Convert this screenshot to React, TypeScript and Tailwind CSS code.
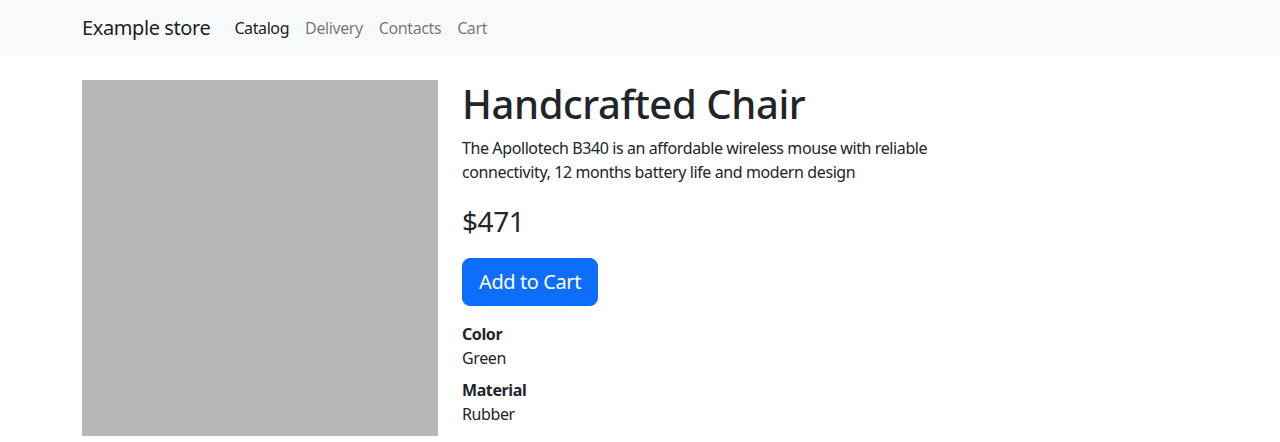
const navLinks = ["Catalog", "Delivery", "Contacts", "Cart"];

const specs = [
  { label: "Color", value: "Green" },
  { label: "Material", value: "Rubber" },
];

export default function App() {
  return (
    <div className="min-h-screen bg-white text-[#212529] font-['Noto_Sans',sans-serif] tracking-[-0.025em]">
      <nav className="h-14 bg-[#f8f9fa]">
        <div className="mx-auto flex h-full w-[1140px] items-center px-3">
          <span className="mr-4 text-xl text-black/90">Example store</span>
          <ul className="flex">
            {navLinks.map((link, i) => (
              <li key={link}>
                <a className={`block px-2 py-2 text-base ${i === 0 ? "text-black/90" : "text-black/55"}`}>{link}</a>
              </li>
            ))}
          </ul>
        </div>
      </nav>

      <main className="mx-auto mt-6 flex w-[1140px]">
        <div className="w-[380px] px-3">
          <div className="h-[356px] w-[356px] bg-[#b8b8b8]" />
        </div>
        <div className="w-[570px] px-3">
          <h1 className="mb-2 text-[40px] font-medium leading-[1.2]">Handcrafted Chair</h1>
          <p className="mb-4 text-base leading-6">
            The Apollotech B340 is an affordable wireless mouse with reliable connectivity, 12 months battery life and
            modern design
          </p>
          <p className="mb-4 text-[28px] leading-[1.5]">$471</p>
          <button className="rounded-lg border border-[#0d6efd] bg-[#0d6efd] px-4 py-2 text-xl leading-[1.5] text-white">
            Add to Cart
          </button>
          <dl className="mt-4">
            {specs.map((s) => (
              <div key={s.label}>
                <dt className="text-base font-bold leading-6">{s.label}</dt>
                <dd className="mb-2 text-base leading-6">{s.value}</dd>
              </div>
            ))}
          </dl>
        </div>
      </main>
    </div>
  );
}
